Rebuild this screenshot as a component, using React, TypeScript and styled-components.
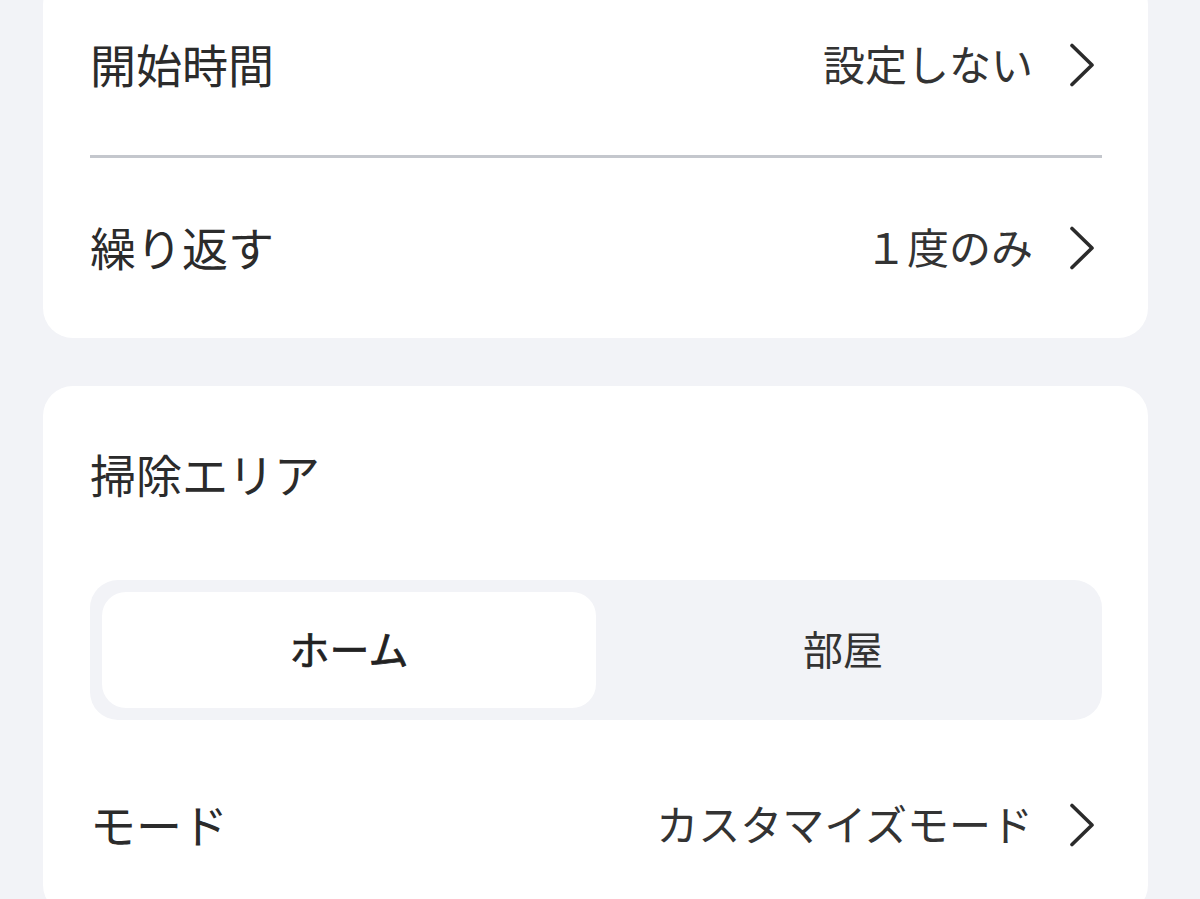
import React, { useState } from "react";
import styled, { createGlobalStyle } from "styled-components";

const GlobalStyle = createGlobalStyle`
  html, body {
    margin: 0;
    padding: 0;
    background: #f2f3f7;
    font-family: "Noto Sans CJK JP", "Noto Sans", sans-serif;
    color: #2b2b2b;
  }
`;

const Page = styled.div`
  display: flex;
  flex-direction: column;
  gap: 48px;
  padding: 0 52px 0 43px;
  margin-top: -25px;
`;

const Card = styled.section`
  background: #ffffff;
  border-radius: 30px;
  padding: 0 46px 0 47px;
  display: flex;
  flex-direction: column;
`;

const Row = styled.div`
  height: 180px;
  display: flex;
  align-items: center;
  justify-content: space-between;
`;

const Label = styled.div`
  font-size: 46px;
  line-height: 1;
  padding-bottom: 4px;
  color: #2b2b2b;
`;

const ValueWrap = styled.div`
  display: flex;
  align-items: center;
  gap: 36px;
`;

const Value = styled.span`
  font-size: 42px;
  line-height: 1;
  padding-bottom: 4px;
  color: #333333;
`;

const Divider = styled.div`
  height: 3px;
  background: #c4c7cd;
`;

const Header = styled.div`
  height: 178px;
  display: flex;
  align-items: center;
`;

const Segment = styled.div`
  margin-top: 16px;
  height: 140px;
  box-sizing: border-box;
  padding: 12px;
  background: #f2f3f7;
  border-radius: 28px;
  display: grid;
  grid-template-columns: 1fr 1fr;
`;

const SegmentButton = styled.button<{ active: boolean }>`
  border: none;
  border-radius: 24px;
  padding: 0 0 4px;
  font-family: inherit;
  font-size: 40px;
  font-weight: 400;
  -webkit-text-stroke: ${(p) => (p.active ? "0.7px #222222" : "0")};
  color: ${(p) => (p.active ? "#222222" : "#333333")};
  background: ${(p) => (p.active ? "#ffffff" : "transparent")};
  cursor: pointer;
`;

const ModeRow = styled(Row)`
  margin-top: 15px;
`;

const Chevron = () => (
  <svg width="33" height="44" viewBox="0 0 33 44" fill="none">
    <path
      d="M3 2.5 L23 22 L3 41.5"
      stroke="#2b2b2b"
      strokeWidth="3.6"
      strokeLinecap="round"
      strokeLinejoin="round"
    />
  </svg>
);

type SettingRowProps = {
  label: string;
  value: string;
};

const SettingRow = ({ label, value }: SettingRowProps) => (
  <Row>
    <Label>{label}</Label>
    <ValueWrap>
      <Value>{value}</Value>
      <Chevron />
    </ValueWrap>
  </Row>
);

const App = () => {
  const [area, setArea] = useState<"home" | "room">("home");

  return (
    <>
      <GlobalStyle />
      <Page>
        <Card>
          <SettingRow label="開始時間" value="設定しない" />
          <Divider />
          <SettingRow label="繰り返す" value="１度のみ" />
        </Card>
        <Card>
          <Header>
            <Label>掃除エリア</Label>
          </Header>
          <Segment>
            <SegmentButton active={area === "home"} onClick={() => setArea("home")}>
              ホーム
            </SegmentButton>
            <SegmentButton active={area === "room"} onClick={() => setArea("room")}>
              部屋
            </SegmentButton>
          </Segment>
          <ModeRow>
            <Label>モード</Label>
            <ValueWrap>
              <Value>カスタマイズモード</Value>
              <Chevron />
            </ValueWrap>
          </ModeRow>
        </Card>
      </Page>
    </>
  );
};

export default App;
